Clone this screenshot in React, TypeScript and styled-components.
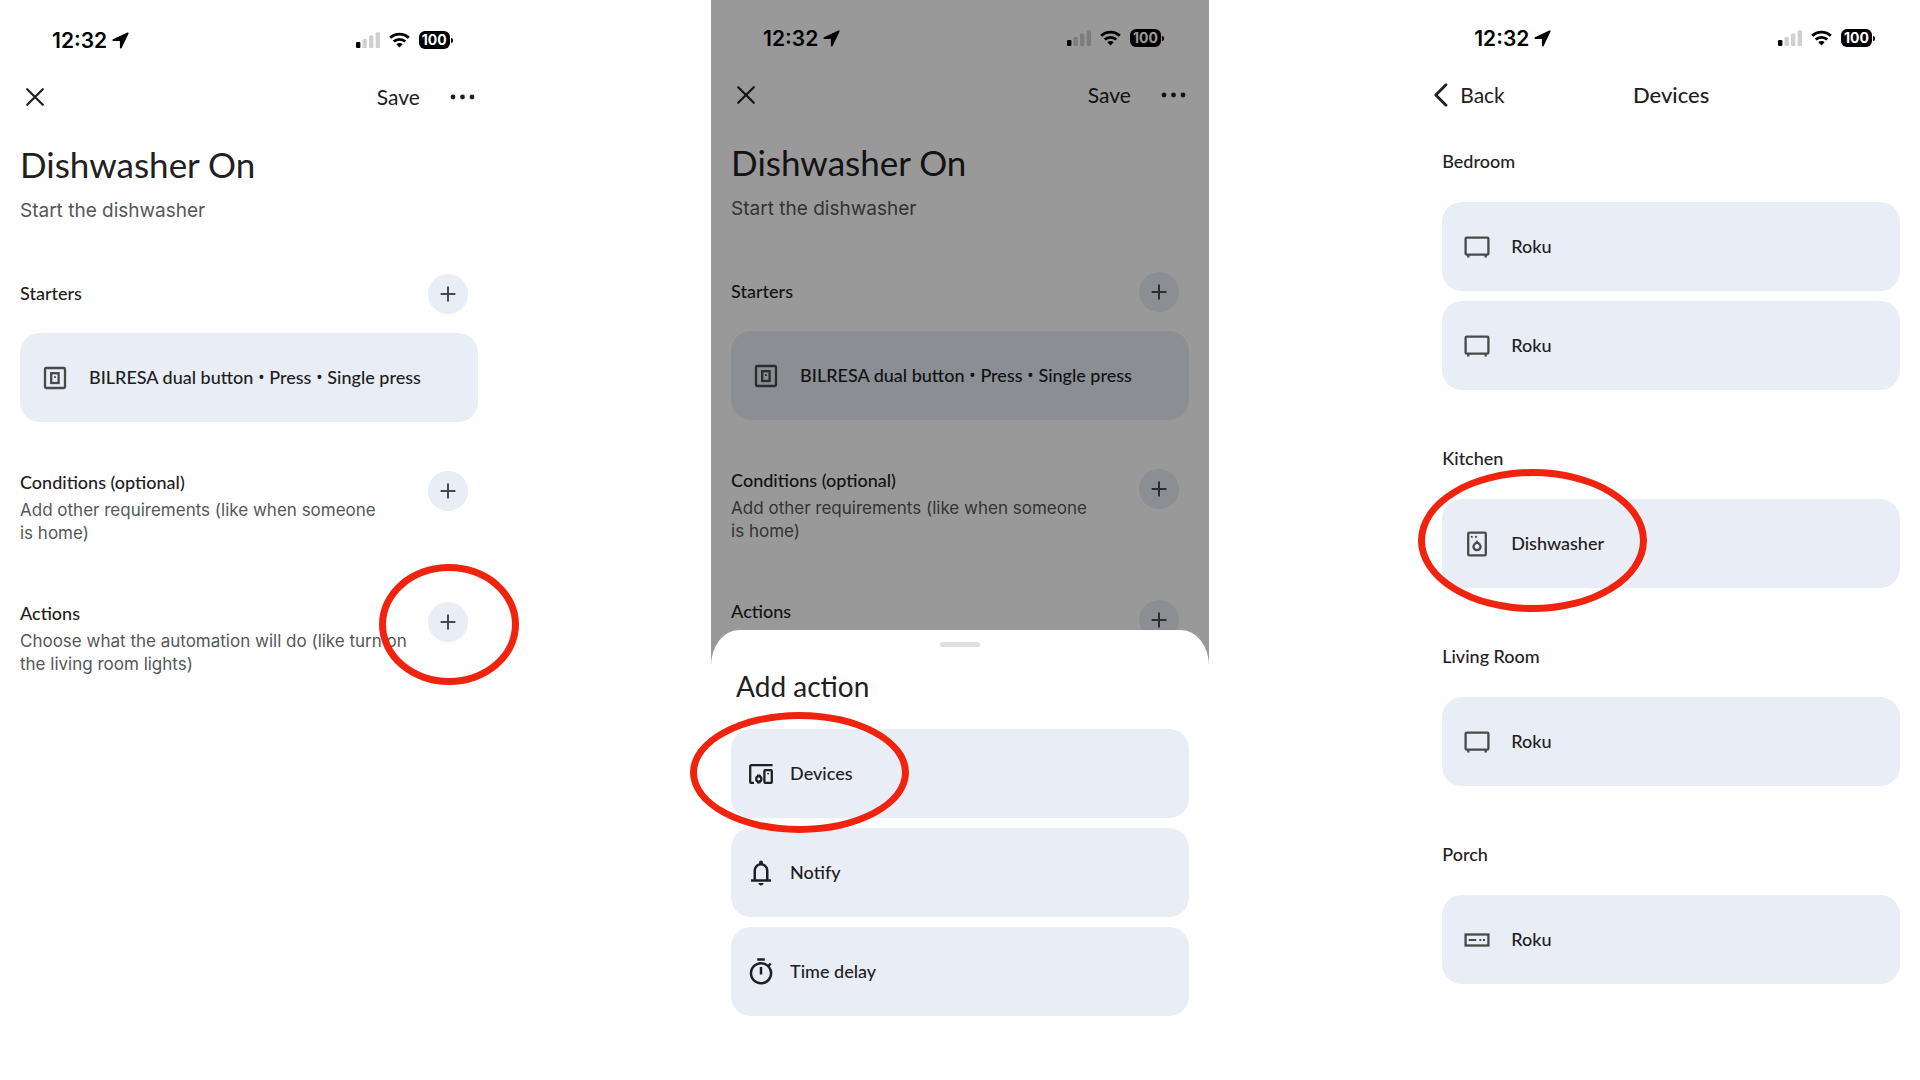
import React from "react";
import type { ReactNode } from "react";
import styled, { createGlobalStyle, css } from "styled-components";

const color = {
  ink: "#1f2022",
  body: "#54575a",
  icon: "#484a48",
  card: "#e8edf6",
  mark: "#f0240e",
  faint: "#cfd0d3",
  handle: "#dfe0e4",
};

const GlobalStyle = createGlobalStyle`
  *, *::before, *::after { box-sizing: border-box; }
  body {
    margin: 0;
    background: #fff;
    color: ${color.ink};
    font-family: Lato, "Open Sans", sans-serif;
  }
  h1, h2, h3, p, ul { margin: 0; padding: 0; }
  button { font: inherit; color: inherit; border: 0; padding: 0; background: none; cursor: pointer; }
  svg { display: block; flex: none; }
`;

/* ---------- layout ---------- */

const Board = styled.main`
  display: grid;
  grid-template-columns: repeat(3, minmax(0, 1fr));
  column-gap: calc(100% / 9);
  min-height: 100vh;
  overflow: hidden;
`;

const Phone = styled.section<{ $stacked?: boolean }>`
  display: grid;
  align-content: start;
  ${(p) =>
    p.$stacked &&
    css`
      align-content: stretch;
      > * {
        grid-area: 1 / 1;
      }
    `}
`;

const Screen = styled.div<{ $lowered?: boolean }>`
  display: flex;
  flex-direction: column;
  padding-top: ${(p) => (p.$lowered ? 26 : 24)}px;
`;

const Scrim = styled.div`
  position: relative;
  background: rgba(0, 0, 0, 0.4);
`;

/* ---------- status bar ---------- */

const StatusRow = styled.header`
  display: flex;
  align-items: center;
  height: 28px;
  padding: 0 45px 0 52px;
  color: #000;
  font-family: Inter, sans-serif;
`;

const Clock = styled.span`
  margin-right: 5px;
  font-size: 21px;
  font-weight: 600;
`;

const StatusIcons = styled.div`
  display: flex;
  align-items: center;
  gap: 9px;
  margin-left: auto;
`;

const Battery = styled.span`
  display: flex;
  align-items: center;
  gap: 1px;

  &::after {
    content: "";
    width: 2px;
    height: 5px;
    border-radius: 0 2px 2px 0;
    background: #000;
  }
`;

const BatteryLevel = styled.span`
  width: 31px;
  border-radius: 6px;
  background: #000;
  color: #fff;
  font-size: 14px;
  font-weight: 700;
  line-height: 18px;
  text-align: center;
`;

/* ---------- navigation ---------- */

const NavRow = styled.nav`
  display: flex;
  align-items: center;
  height: 40px;
  margin-top: 23px;
  padding: 0 23px;
  font-size: 21px;
`;

const NavActions = styled.div`
  display: flex;
  align-items: center;
  gap: 30px;
  margin-left: auto;
`;

const NavLabel = styled.span`
  display: block;
  padding-bottom: 2px;
`;

const CenteredNav = styled(NavRow)`
  display: grid;
  grid-template-columns: 1fr auto 1fr;
  padding: 0 12px;
`;

const BackButton = styled.button`
  display: flex;
  align-items: center;
  justify-self: start;
  gap: 12px;
`;

const NavTitle = styled.h1`
  padding-bottom: 2px;
  font-size: 22px;
  font-weight: 500;
`;

/* ---------- automation ---------- */

const Content = styled.div`
  display: flex;
  flex-direction: column;
  padding: 25px 20px 0;
`;

const Title = styled.h1`
  font-size: 35px;
  font-weight: 400;
  line-height: 44px;
`;

const Subtitle = styled.p`
  margin-top: 13px;
  color: ${color.body};
  font: 19px/24px Inter, sans-serif;
`;

const SectionRow = styled.div<{ $centered?: boolean; $gap: number }>`
  display: flex;
  align-items: ${(p) => (p.$centered ? "center" : "flex-start")};
  justify-content: space-between;
  margin-top: ${(p) => p.$gap}px;
  padding-right: 10px;
`;

const SectionTitle = styled.h2`
  padding-bottom: 2px;
  font-size: 18px;
  font-weight: 500;
  line-height: 22px;
`;

const Hint = styled.p`
  margin-top: 4px;
  color: ${color.body};
  font: 17px/23px Inter, sans-serif;
  white-space: nowrap;
`;

const AddSlot = styled.div`
  position: relative;
  flex: none;
`;

const AddButton = styled.button`
  display: grid;
  place-items: center;
  width: 40px;
  height: 40px;
  border-radius: 50%;
  background: ${color.card};
  color: ${color.icon};
`;

/* ---------- cards ---------- */

const CardList = styled.ul`
  display: flex;
  flex-direction: column;
  gap: 10px;
  list-style: none;
`;

const CardItem = styled.li`
  position: relative;
`;

const Card = styled.button<{ $compact?: boolean }>`
  display: flex;
  align-items: center;
  gap: ${(p) => (p.$compact ? 14 : 19)}px;
  width: 100%;
  height: 89px;
  padding: 0 ${(p) => (p.$compact ? 15 : 20)}px;
  border-radius: 20px;
  background: ${color.card};
  font-size: 18px;
  font-weight: 500;
  text-align: left;

  svg {
    color: ${(p) => (p.$compact ? color.ink : color.icon)};
  }
`;

const CardLabel = styled.span`
  padding-bottom: 2px;
`;

const StarterCard = styled(Card)`
  margin-top: 19px;
`;

const Bullet = styled.span`
  font-family: "Open Sans", sans-serif;
`;

/* ---------- bottom sheet ---------- */

const Sheet = styled.div`
  position: relative;
  align-self: end;
  padding: 12px 20px 64px;
  border-radius: 28px 28px 0 0 / 36px 36px 0 0;
  background: #fff;
`;

const Handle = styled.div`
  width: 40px;
  height: 5px;
  margin: 0 auto;
  border-radius: 3px;
  background: ${color.handle};
`;

const SheetTitle = styled.h2`
  margin: 22px 0 26px;
  padding-left: 5px;
  font-size: 28px;
  font-weight: 400;
  line-height: 34px;
`;

/* ---------- devices ---------- */

const Rooms = styled.div`
  display: flex;
  flex-direction: column;
  gap: 57px;
  padding: 35px 20px 0;
`;

const Room = styled.section`
  display: flex;
  flex-direction: column;
  gap: 28px;
`;

/* ---------- hand-drawn marker rings ---------- */

const Ring = styled.span<{ $x: number; $y: number; $w: number; $h: number }>`
  position: absolute;
  z-index: 2;
  left: ${(p) => p.$x}px;
  top: ${(p) => p.$y}px;
  width: ${(p) => p.$w}px;
  height: ${(p) => p.$h}px;
  border: 7px solid ${color.mark};
  border-radius: 50%;
  pointer-events: none;
`;

/* ---------- icons ---------- */

const Glyph = ({ children }: { children: ReactNode }) => (
  <svg width="30" height="30" viewBox="0 0 30 30" fill="none" stroke="currentColor" strokeWidth="2.3" aria-hidden="true">
    {children}
  </svg>
);

const SwitchIcon = () => (
  <Glyph>
    <rect x="5" y="5" width="20" height="20" rx="1.2" />
    <rect x="11.2" y="10.2" width="7.4" height="9.8" />
    <rect x="14" y="13.2" width="1.8" height="1.8" fill="currentColor" stroke="none" />
  </Glyph>
);

const TvIcon = () => (
  <Glyph>
    <rect x="3.6" y="5.6" width="22.8" height="17" rx="1.2" />
    <path d="M6.3 23v2.6M23.7 23v2.6" />
  </Glyph>
);

const DishwasherIcon = () => (
  <Glyph>
    <rect x="6.2" y="3.6" width="17.6" height="22.8" rx="1.2" />
    <circle cx="9.8" cy="7.8" r="1.1" fill="currentColor" stroke="none" />
    <circle cx="14" cy="7.8" r="1.1" fill="currentColor" stroke="none" />
    <path d="M15 13c1 1.3 3.6 2.3 3.6 4.6a3.6 3.6 0 0 1-7.2 0c0-2.3 2.6-3.3 3.6-4.6z" />
  </Glyph>
);

const StreamBoxIcon = () => (
  <Glyph>
    <rect x="3.6" y="9.5" width="22.8" height="11" />
    <path d="M6.8 15h7.4M17.3 15h2M21 15h2" strokeWidth="2" />
  </Glyph>
);

const DevicesIcon = () => (
  <Glyph>
    <path d="M26.600 6.200H5.600A1.400 1.400 0 0 0 4.200 7.600V22.400A1.400 1.400 0 0 0 5.600 23.800H8" />
    <rect x="18.400" y="11.200" width="7.400" height="12.600" rx=".8" />
    <circle cx="22.100" cy="14.600" r=".9" fill="currentColor" stroke="none" />
    <circle cx="12.800" cy="20" r="2.600" />
    <path d="M11.200 15.600h3.200l.6 2h-4.400zM11.200 24.400h3.200l.6-2h-4.400z" fill="currentColor" stroke="none" />
  </Glyph>
);

const BellIcon = () => (
  <svg width="30" height="30" viewBox="0 0 24 24" fill="currentColor" aria-hidden="true">
    <path d="M4 19v-2h2v-7q0-2.075 1.250-3.687T10.500 4.200v-.7q0-.625.438-1.062T12 2t1.063.438T13.500 3.500v.7q2 .5 3.250 2.113T18 10v7h2v2zm8 3q-.825 0-1.412-.587T10 20h4q0 .825-.587 1.413T12 22m-4-5h8v-7q0-1.650-1.175-2.825T12 6T9.175 7.175T8 10z" />
  </svg>
);

const TimerIcon = () => (
  <svg width="30" height="30" viewBox="0 0 24 24" fill="currentColor" aria-hidden="true">
    <path d="M15 1H9v2h6zm-4 13h2V8h-2zm8.030-6.610 1.420-1.420c-.43-.51-.9-.99-1.410-1.410l-1.420 1.420A8.962 8.962 0 0 0 12 4c-4.970 0-9 4.030-9 9s4.020 9 9 9a8.994 8.994 0 0 0 7.030-14.610zM12 20c-3.870 0-7-3.130-7-7s3.130-7 7-7 7 3.130 7 7-3.130 7-7 7z" />
  </svg>
);

const PlusIcon = () => (
  <svg width="16" height="16" viewBox="0 0 16 16" stroke="currentColor" strokeWidth="2" aria-hidden="true">
    <path d="M8 .6v14.800M.6 8h14.800" />
  </svg>
);

const CloseIcon = () => (
  <svg width="24" height="24" viewBox="0 0 24 24" stroke="currentColor" strokeWidth="2.200" strokeLinecap="round" aria-hidden="true">
    <path d="M4.200 4.200l15.600 15.600M19.800 4.200L4.200 19.800" />
  </svg>
);

const MoreIcon = () => (
  <svg width="25" height="6" viewBox="0 0 25 6" fill="currentColor" aria-hidden="true">
    <circle cx="3" cy="3" r="2.400" />
    <circle cx="12.500" cy="3" r="2.400" />
    <circle cx="22" cy="3" r="2.400" />
  </svg>
);

const ChevronIcon = () => (
  <svg width="14" height="24" viewBox="0 0 14 24" fill="none" stroke="currentColor" strokeWidth="2.800" strokeLinecap="round" strokeLinejoin="round" aria-hidden="true">
    <path d="M12 1.800L1.800 12l10.200 10.200" />
  </svg>
);

const LocationIcon = () => (
  <svg width="17" height="17" viewBox="0 0 17 17" fill="currentColor" aria-hidden="true">
    <path d="M15.300.5L1 7.300c-1 .5-.7 1.700.3 1.700h6.200c.3 0 .4.1.4.400v6.200c0 1.100 1.300 1.300 1.700.3L16.500 1.700C16.900.8 16.200.1 15.300.5z" />
  </svg>
);

const SignalIcon = () => (
  <svg width="24" height="16" viewBox="0 0 24 16" aria-hidden="true">
    <rect x="0" y="10" width="4.400" height="6" rx="1.200" fill="#000" />
    <rect x="6.500" y="7" width="4.400" height="9" rx="1.200" fill={color.faint} />
    <rect x="13" y="3.600" width="4.400" height="12.400" rx="1.200" fill={color.faint} />
    <rect x="19.600" y=".3" width="4.400" height="15.700" rx="1.200" fill={color.faint} />
  </svg>
);

const WifiIcon = () => (
  <svg width="21" height="16" viewBox="0 0 21 16" fill="none" stroke="#000" strokeWidth="2.800" aria-hidden="true">
    <path d="M1.200 5.800a13.400 13.400 0 0 1 18.600 0" />
    <path d="M4.700 9.600a8.400 8.400 0 0 1 11.600 0" />
    <path d="M10.500 15.600l-3.200-3.300a4.600 4.600 0 0 1 6.400 0z" fill="#000" stroke="none" />
  </svg>
);

/* ---------- pieces ---------- */

const StatusBar = () => (
  <StatusRow>
    <Clock>12:32</Clock>
    <LocationIcon />
    <StatusIcons>
      <SignalIcon />
      <WifiIcon />
      <Battery>
        <BatteryLevel>100</BatteryLevel>
      </Battery>
    </StatusIcons>
  </StatusRow>
);

const AddControl = ({ label, ringed }: { label: string; ringed?: boolean }) => (
  <AddSlot>
    <AddButton aria-label={label}>
      <PlusIcon />
    </AddButton>
    {ringed && <Ring $x={-49} $y={-38} $w={140} $h={121} />}
  </AddSlot>
);

const Automation = ({ lowered, ringed, sheetOpen }: { lowered?: boolean; ringed?: boolean; sheetOpen?: boolean }) => (
  <Screen $lowered={lowered}>
    <StatusBar />
    <NavRow>
      <button aria-label="Close">
        <CloseIcon />
      </button>
      <NavActions>
        <button>
          <NavLabel>Save</NavLabel>
        </button>
        <button aria-label="More options">
          <MoreIcon />
        </button>
      </NavActions>
    </NavRow>
    <Content>
      <Title>Dishwasher On</Title>
      <Subtitle>Start the dishwasher</Subtitle>

      <SectionRow $centered $gap={51}>
        <SectionTitle>Starters</SectionTitle>
        <AddControl label="Add starter" />
      </SectionRow>
      <StarterCard>
        <SwitchIcon />
        <CardLabel>
          BILRESA dual button <Bullet>•</Bullet> Press <Bullet>•</Bullet> Single press
        </CardLabel>
      </StarterCard>

      <SectionRow $gap={49}>
        <div>
          <SectionTitle>Conditions (optional)</SectionTitle>
          <Hint>
            Add other requirements (like when someone
            <br />
            is home)
          </Hint>
        </div>
        <AddControl label="Add condition" />
      </SectionRow>

      <SectionRow $gap={57}>
        <div>
          <SectionTitle>Actions</SectionTitle>
          {!sheetOpen && (
            <Hint>
              Choose what the automation will do (like turn on
              <br />
              the living room lights)
            </Hint>
          )}
        </div>
        <AddControl label="Add action" ringed={ringed} />
      </SectionRow>
    </Content>
  </Screen>
);

const sheetActions = [
  { name: "Devices", icon: <DevicesIcon />, ringed: true },
  { name: "Notify", icon: <BellIcon /> },
  { name: "Time delay", icon: <TimerIcon /> },
];

const rooms = [
  {
    name: "Bedroom",
    devices: [
      { name: "Roku", icon: <TvIcon /> },
      { name: "Roku", icon: <TvIcon /> },
    ],
  },
  { name: "Kitchen", devices: [{ name: "Dishwasher", icon: <DishwasherIcon />, ringed: true }] },
  { name: "Living Room", devices: [{ name: "Roku", icon: <TvIcon /> }] },
  { name: "Porch", devices: [{ name: "Roku", icon: <StreamBoxIcon /> }] },
] as { name: string; devices: { name: string; icon: ReactNode; ringed?: boolean }[] }[];

export default function App() {
  return (
    <>
      <GlobalStyle />
      <Board>
        <Phone>
          <Automation lowered ringed />
        </Phone>

        <Phone $stacked>
          <Automation sheetOpen />
          <Scrim />
          <Sheet>
            <Handle />
            <SheetTitle>Add action</SheetTitle>
            <CardList>
              {sheetActions.map((a) => (
                <CardItem key={a.name}>
                  <Card $compact>
                    {a.icon}
                    <CardLabel>{a.name}</CardLabel>
                  </Card>
                  {a.ringed && <Ring $x={-41} $y={-17} $w={219} $h={121} />}
                </CardItem>
              ))}
            </CardList>
          </Sheet>
        </Phone>

        <Phone>
          <Screen>
            <StatusBar />
            <CenteredNav>
              <BackButton>
                <ChevronIcon />
                <NavLabel>Back</NavLabel>
              </BackButton>
              <NavTitle>Devices</NavTitle>
            </CenteredNav>
            <Rooms>
              {rooms.map((room) => (
                <Room key={room.name}>
                  <SectionTitle>{room.name}</SectionTitle>
                  <CardList>
                    {room.devices.map((d, i) => (
                      <CardItem key={i}>
                        <Card>
                          {d.icon}
                          <CardLabel>{d.name}</CardLabel>
                        </Card>
                        {d.ringed && <Ring $x={-24} $y={-30} $w={229} $h={143} />}
                      </CardItem>
                    ))}
                  </CardList>
                </Room>
              ))}
            </Rooms>
          </Screen>
        </Phone>
      </Board>
    </>
  );
}
